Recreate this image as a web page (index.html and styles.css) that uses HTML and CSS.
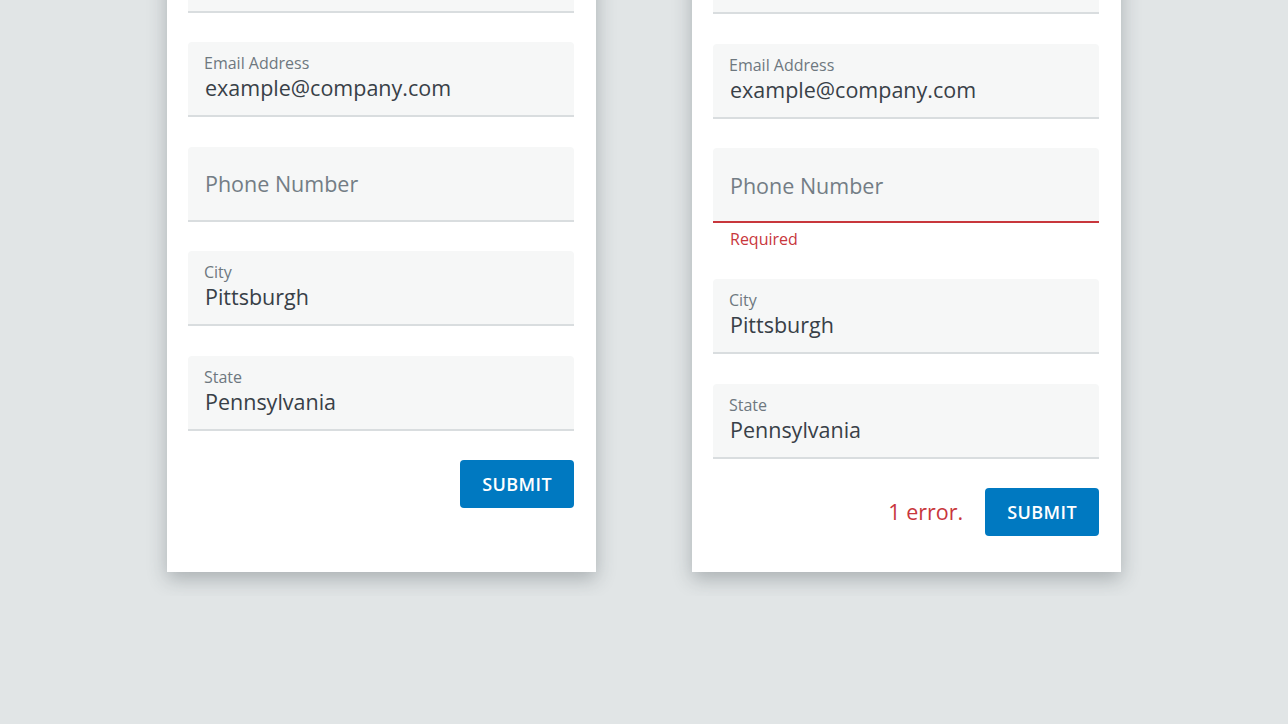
FILE: index.html
```html
<!DOCTYPE html>
<html lang="en">
<head>
<meta charset="utf-8">
<title>Contact form</title>
<link rel="stylesheet" href="styles.css">
</head>
<body>
<div class="stage">
  <form class="card card--ok">
    <div class="field field--stub"></div>
    <div class="field"><span class="label">Email Address</span><span class="value">example@company.com</span></div>
    <div class="field field--empty"><span class="placeholder">Phone Number</span></div>
    <div class="field"><span class="label">City</span><span class="value">Pittsburgh</span></div>
    <div class="field"><span class="label">State</span><span class="value">Pennsylvania</span></div>
    <div class="actions"><button type="button" class="submit">SUBMIT</button></div>
  </form>
  <form class="card card--error">
    <div class="field field--stub"></div>
    <div class="field"><span class="label">Email Address</span><span class="value">example@company.com</span></div>
    <div class="group">
      <div class="field field--empty field--invalid"><span class="placeholder">Phone Number</span></div>
      <div class="helper">Required</div>
    </div>
    <div class="field"><span class="label">City</span><span class="value">Pittsburgh</span></div>
    <div class="field"><span class="label">State</span><span class="value">Pennsylvania</span></div>
    <div class="actions"><span class="summary">1 error.</span><button type="button" class="submit">SUBMIT</button></div>
  </form>
</div>
</body>
</html>
```
FILE: styles.css
```css
html {
  background: #ffffff;
}
body {
  margin: 0;
  height: 724px;
  background: #e1e5e6;
  font-family: "Open Sans", "Noto Sans", sans-serif;
}
.stage {
  height: 596px;
  overflow: hidden;
  display: flex;
  justify-content: center;
  align-items: flex-end;
  gap: 96px;
  padding-bottom: 24px;
  box-sizing: border-box;
}
.card {
  width: 429px;
  flex: none;
  box-sizing: border-box;
  background: #ffffff;
  padding: 0 22px 0 21px;
  display: flex;
  flex-direction: column;
  gap: 29.5px;
  box-shadow: 0 7px 18px rgba(55, 65, 70, 0.32);
}
.card--ok {
  padding-bottom: 64px;
}
.card--error {
  padding-bottom: 36px;
}
.field {
  height: 75px;
  box-sizing: border-box;
  background: #f6f7f7;
  border-bottom: 2px solid #d9dddf;
  border-radius: 4px 4px 0 0;
  padding: 11px 17px 0 16px;
  display: flex;
  flex-direction: column;
}
.label {
  font-size: 16px;
  line-height: 20px;
  color: #6e787f;
}
.value {
  margin-top: 1px;
  font-size: 21.5px;
  line-height: 28px;
  color: #384047;
  padding-left: 1px;
}
.field--empty {
  justify-content: center;
  padding-top: 2px;
}
.placeholder {
  font-size: 21.5px;
  line-height: 28px;
  color: #737d85;
  padding-left: 1px;
}
.field--invalid {
  border-bottom-color: #c8363c;
}
.group {
  display: flex;
  flex-direction: column;
}
.helper {
  height: 26.5px;
  box-sizing: border-box;
  padding: 6px 0 0 17px;
  font-size: 16px;
  line-height: 20px;
  color: #c8363c;
}
.actions {
  display: flex;
  justify-content: flex-end;
  align-items: center;
  gap: 22px;
}
.summary {
  font-size: 21.5px;
  line-height: 28px;
  color: #c8363c;
}
.submit {
  height: 48px;
  padding: 0 22px;
  border: none;
  border-radius: 4px;
  background: #0079c1;
  color: #ffffff;
  font-family: "Open Sans", "Noto Sans", sans-serif;
  font-weight: 600;
  font-size: 18px;
  letter-spacing: 0.4px;
}
```
